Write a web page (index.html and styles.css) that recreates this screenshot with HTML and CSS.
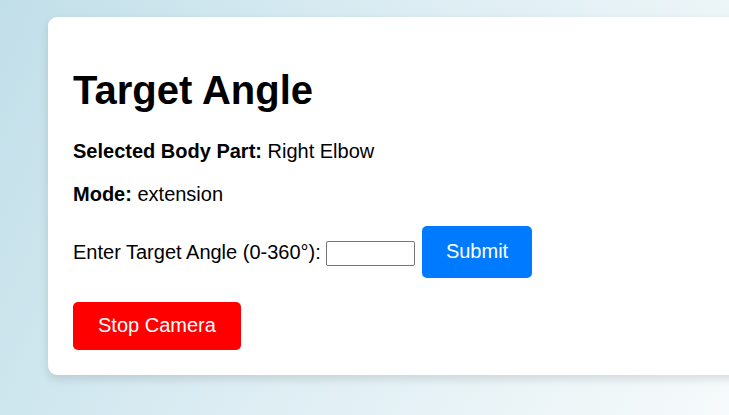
FILE: index.html
```html
<!DOCTYPE html>
<html lang="en">
<head>
<meta charset="utf-8">
<title>Target Angle</title>
<link rel="stylesheet" href="styles.css">
</head>
<body>
  <main class="card">
    <h1 class="title">Target Angle</h1>
    <p class="info"><strong>Selected Body Part:</strong> Right Elbow</p>
    <p class="info"><strong>Mode:</strong> extension</p>
    <p class="info angle-row">
      <label for="angle">Enter Target Angle (0-360°):</label>
      <input id="angle" class="angle-input" type="number">
      <button class="btn btn-submit" type="button">Submit</button>
    </p>
    <div class="actions">
      <button class="btn btn-stop" type="button">Stop Camera</button>
    </div>
  </main>
</body>
</html>
```

FILE: styles.css
```css
html, body {
  margin: 0;
  padding: 0;
  height: 100%;
  overflow: hidden;
}

body {
  font-family: "Liberation Sans", Arial, sans-serif;
  font-size: 20px;
  color: #000;
  background: linear-gradient(115deg, #c1dfe9 0%, #dcedf3 45%, #f6fafb 100%);
  padding: 17px 0 0 48px;
  box-sizing: border-box;
}

.card {
  width: 760px;
  background: #fff;
  border-radius: 9px;
  box-shadow: 0 4px 10px rgba(0, 0, 0, 0.12);
  padding: 23px 25px 25px 25px;
  box-sizing: border-box;
}

.title {
  font-size: 40px;
  font-weight: bold;
  margin: 26.8px 0;
  line-height: 46px;
}

.info {
  margin: 20px 0;
  line-height: 23px;
}

.angle-input {
  box-sizing: border-box;
  width: 89px;
  height: 25px;
  border: 1px solid #767676;
  border-radius: 2px;
  vertical-align: baseline;
  margin: 0;
  padding: 1px 2px;
  font-size: 13px;
  -moz-appearance: textfield;
}

.angle-input::-webkit-outer-spin-button,
.angle-input::-webkit-inner-spin-button {
  -webkit-appearance: none;
  margin: 0;
}

.btn {
  font-family: "Liberation Sans", Arial, sans-serif;
  font-size: 20px;
  line-height: 23px;
  color: #fff;
  border: none;
  border-radius: 5px;
  cursor: pointer;
}

.btn-submit {
  background: #007bff;
  padding: 14.5px 24px;
  margin-left: 1px;
}

.btn-stop {
  background: #ff0000;
  padding: 12.5px 25px;
}

.actions {
  margin-top: 24px;
}
```
